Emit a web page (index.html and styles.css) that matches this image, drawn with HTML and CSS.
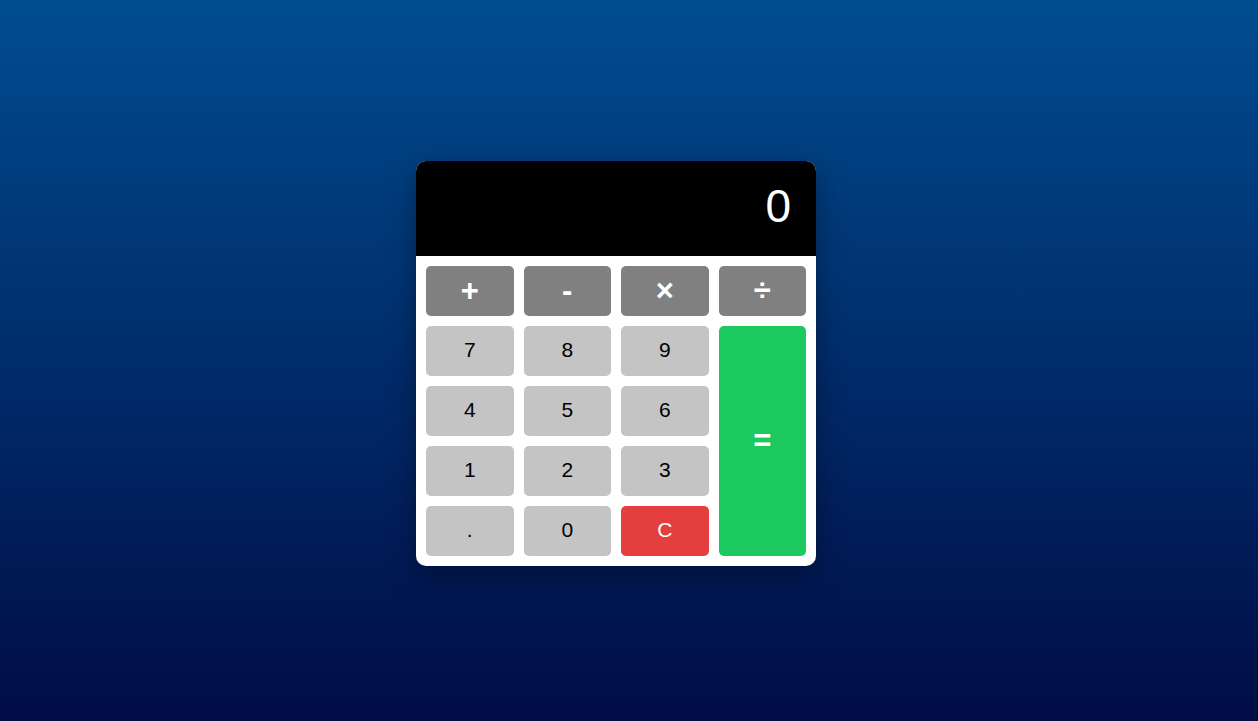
FILE: index.html
```html
<!DOCTYPE html>
<html lang="en">
<head>
<meta charset="utf-8">
<title>Calculator</title>
<link rel="stylesheet" href="styles.css">
</head>
<body>
  <div class="calculator">
    <div class="display">0</div>
    <div class="keys">
      <button class="key op">+</button>
      <button class="key op">-</button>
      <button class="key op">×</button>
      <button class="key op">÷</button>
      <button class="key num">7</button>
      <button class="key num">8</button>
      <button class="key num">9</button>
      <button class="key equals">=</button>
      <button class="key num">4</button>
      <button class="key num">5</button>
      <button class="key num">6</button>
      <button class="key num">1</button>
      <button class="key num">2</button>
      <button class="key num">3</button>
      <button class="key num">.</button>
      <button class="key num">0</button>
      <button class="key clear">C</button>
    </div>
  </div>
</body>
</html>
```
FILE: styles.css
```css
html, body {
  margin: 0;
  padding: 0;
}
body {
  min-height: 100vh;
  box-sizing: border-box;
  padding: 6px 26px 0 0;
  display: flex;
  align-items: center;
  justify-content: center;
  background: linear-gradient(to bottom, #004d90, #000c46);
  font-family: "Liberation Sans", Arial, sans-serif;
}
.calculator {
  width: 400px;
  background: #ffffff;
  border-radius: 10px;
  overflow: hidden;
  box-shadow: 0 10px 30px rgba(0, 0, 0, 0.35);
}
.display {
  height: 95px;
  box-sizing: border-box;
  background: #000000;
  color: #ffffff;
  font-size: 46px;
  text-align: right;
  padding: 0 25px;
  line-height: 91px;
}
.keys {
  display: grid;
  grid-template-columns: repeat(4, 1fr);
  grid-auto-rows: 50px;
  gap: 10px;
  padding: 10px;
}
.key {
  border: none;
  border-radius: 5px;
  font-family: "Liberation Sans", Arial, sans-serif;
  font-size: 21px;
  padding: 0 0 2px;
  color: #000000;
  cursor: pointer;
}
.op {
  background: #808080;
  color: #ffffff;
  font-size: 31px;
  font-weight: bold;
  padding: 0;
}
.num {
  background: #c4c4c4;
}
.equals {
  grid-column: 4;
  grid-row: 2 / span 4;
  background: #1bc95f;
  color: #ffffff;
  font-size: 31px;
  font-weight: bold;
  padding: 0;
}
.clear {
  background: #e53e3e;
  color: #ffffff;
}
```
